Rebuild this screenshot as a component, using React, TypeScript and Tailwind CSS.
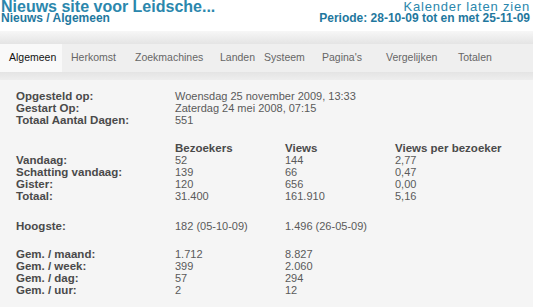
import React from "react";

const font = { fontFamily: '"Liberation Sans", Arial, sans-serif' };

const tabs: { t: string; w: string }[] = [
  { t: "Algemeen", w: "w-[62px]" },
  { t: "Herkomst", w: "w-[64px]" },
  { t: "Zoekmachines", w: "w-[85px]" },
  { t: "Landen", w: "w-[44px]" },
  { t: "Systeem", w: "w-[58px]" },
  { t: "Pagina's", w: "w-[64px]" },
  { t: "Vergelijken", w: "w-[72px]" },
  { t: "Totalen", w: "w-[60px]" },
];

function Row({ cells, bold }: { cells: string[]; bold?: boolean }) {
  return (
    <div className="grid grid-cols-[159px_110px_110px_1fr] h-[12px] leading-[12px]">
      {cells.map((c, i) => (
        <div
          key={i}
          className={
            i === 0 || bold
              ? "font-bold text-[11.5px] text-[#4a4a4a] whitespace-nowrap"
              : "text-[11px] text-[#5a5a5a] whitespace-nowrap"
          }
        >
          {c}
        </div>
      ))}
    </div>
  );
}

function WideRow({ label, value }: { label: string; value: string }) {
  return (
    <div className="grid grid-cols-[159px_1fr] h-[12px] leading-[12px]">
      <div className="font-bold text-[11.5px] text-[#4a4a4a] whitespace-nowrap">{label}</div>
      <div className="text-[11px] text-[#5a5a5a] whitespace-nowrap">{value}</div>
    </div>
  );
}

export default function App() {
  return (
    <div style={font} className="w-[533px] h-[307px] overflow-hidden bg-[#f5f5f5]">
      <div className="bg-white h-[31px] flex justify-between pl-[1px] pr-[3px]">
        <div>
          <div className="text-[16px] leading-[14px] font-bold text-[#2b87ad] whitespace-nowrap">
            Nieuws site voor Leidsche...
          </div>
          <div className="text-[12px] leading-[9px] font-bold text-[#1f789e] whitespace-nowrap">
            Nieuws / Algemeen
          </div>
        </div>
        <div className="flex flex-col items-end">
          <div className="text-[13px] leading-[13px] tracking-[0.8px] text-[#2b87ad] whitespace-nowrap">
            Kalender laten zien
          </div>
          <div className="text-[12px] leading-[9px] font-bold text-[#1f789e] mt-[1px] whitespace-nowrap">
            Periode: 28-10-09 tot en met 25-11-09
          </div>
        </div>
      </div>
      <div className="h-[13px] bg-gradient-to-b from-[#f7f7f7] to-[#e4e4e4]" />
      <div className="h-[28px] bg-[#efefef] flex text-[10.5px]">
        {tabs.map((tab, i) => (
          <div
            key={tab.t}
            className={
              i === 0
                ? `${tab.w} pl-[9px] flex items-center bg-[#f9f9f9] text-[#111] whitespace-nowrap`
                : `${tab.w} pl-[9px] flex items-center text-[#666] whitespace-nowrap`
            }
          >
            {tab.t}
          </div>
        ))}
      </div>
      <div className="h-[8px] bg-gradient-to-b from-[#e4e4e4] to-[#eeeeee]" />
      <div className="pl-[16px] pt-[10px]">
        <WideRow label="Opgesteld op:" value="Woensdag 25 november 2009, 13:33" />
        <WideRow label="Gestart Op:" value="Zaterdag 24 mei 2008, 07:15" />
        <WideRow label="Totaal Aantal Dagen:" value="551" />
        <div className="mt-[16px]">
          <Row cells={["", "Bezoekers", "Views", "Views per bezoeker"]} bold />
          <Row cells={["Vandaag:", "52", "144", "2,77"]} />
          <Row cells={["Schatting vandaag:", "139", "66", "0,47"]} />
          <Row cells={["Gister:", "120", "656", "0,00"]} />
          <Row cells={["Totaal:", "31.400", "161.910", "5,16"]} />
        </div>
        <div className="mt-[18px]">
          <Row cells={["Hoogste:", "182 (05-10-09)", "1.496 (26-05-09)", ""]} />
        </div>
        <div className="mt-[16px]">
          <Row cells={["Gem. / maand:", "1.712", "8.827", ""]} />
          <Row cells={["Gem. / week:", "399", "2.060", ""]} />
          <Row cells={["Gem. / dag:", "57", "294", ""]} />
          <Row cells={["Gem. / uur:", "2", "12", ""]} />
        </div>
      </div>
    </div>
  );
}
